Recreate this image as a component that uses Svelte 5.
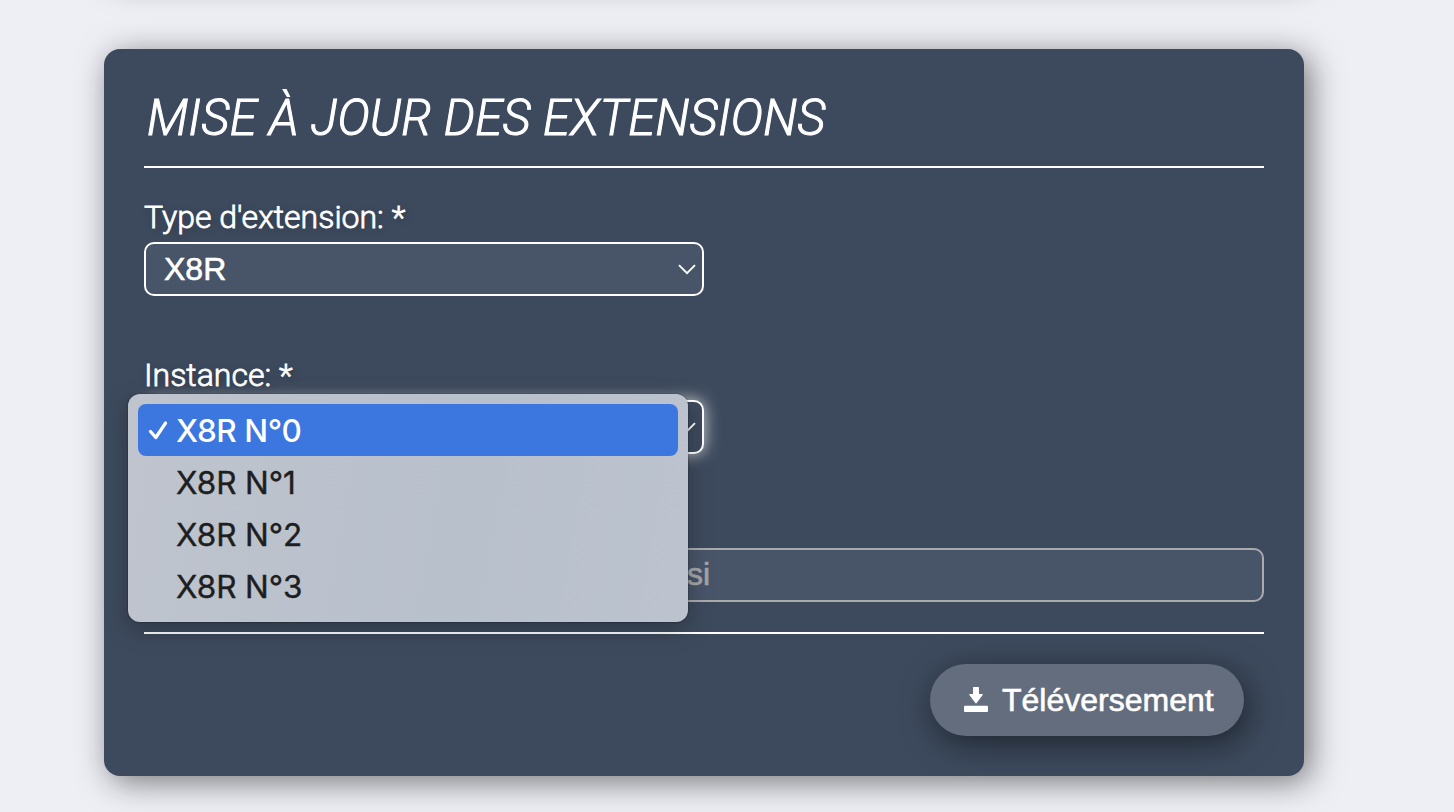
<script lang="ts">
    const instances = ["X8R N°0", "X8R N°1", "X8R N°2", "X8R N°3"];
    let extensionType = $state("X8R");
    let selected = $state(0);
    let open = $state(true);

    function choose(index: number) {
        selected = index;
        open = false;
    }
</script>

{#snippet chevron()}
    <svg class="chevron" viewBox="0 0 18 11" fill="none" stroke="currentColor">
        <path d="M1 1.2 9 9.2 17 1.2" stroke-width="1.9" />
    </svg>
{/snippet}

<main>
    <section class="card previous"></section>
    <section class="card">
        <h2>MISE À JOUR DES EXTENSIONS</h2>

        <div class="field">
            <span class="label">Type d'extension: *</span>
            <button class="control">
                <span>{extensionType}</span>
                {@render chevron()}
            </button>
        </div>

        <div class="field instance">
            <span class="label">Instance: *</span>
            <button class="control" class:focused={open} onclick={() => (open = !open)}>
                <span>{open ? "" : instances[selected]}</span>
                {@render chevron()}
            </button>

            {#if open}
                <div class="menu" role="listbox">
                    {#each instances as instance, i}
                        <button
                            class="option"
                            class:active={i === selected}
                            role="option"
                            aria-selected={i === selected}
                            onclick={() => choose(i)}
                        >
                            <span class="tick">
                                {#if i === selected}
                                    <svg viewBox="0 0 20 22" fill="none" stroke="currentColor">
                                        <path
                                            d="M2.5 12.5 7.8 18.5 17.5 4.1"
                                            stroke-width="3.3"
                                            stroke-linecap="round"
                                            stroke-linejoin="round"
                                        />
                                    </svg>
                                {/if}
                            </span>
                            {instance}
                        </button>
                    {/each}
                </div>
            {/if}
        </div>

        <div class="file"><span>si</span></div>

        <footer>
            <button class="upload">
                <svg viewBox="0 0 24 25" fill="currentColor">
                    <path
                        d="M9.6 0h4.8q.6 0 .6.6V7h3.2q1 0 .4.9L12.7 16q-.7.9-1.4 0L5.4 7.9Q4.8 7 5.8 7H9V.6q0-.6.6-.6z"
                    />
                    <rect y="18.8" width="24" height="6.2" rx="0.8" />
                </svg>
                <span>Téléversement</span>
            </button>
        </footer>
    </section>
</main>

<style>
    :global(body) {
        background: #eeeff5;
        overflow: hidden;
    }
    main {
        box-sizing: border-box;
        height: 812px;
        padding: 0 150px 0 104px;
        font-family: Roboto, sans-serif;
        color: #fff;
        overflow: hidden;
    }
    .card {
        box-sizing: border-box;
        height: 727px;
        padding: 36px 40px 40px;
        border-radius: 16px;
        background: #3d4a5d;
        box-shadow: 6px 6px 32px rgba(0, 0, 0, 0.5);
    }
    .card.previous {
        margin: -753px 0 75px;
    }
    h2 {
        box-sizing: border-box;
        height: 83px;
        margin: 0 0 31px;
        padding: 2px 0 0 3px;
        border-bottom: 2px solid #fff;
        font-size: 49px;
        font-style: italic;
        font-weight: 300;
        letter-spacing: 0.24px;
        line-height: 64px;
        white-space: nowrap;
        -webkit-text-stroke: 1px #fff;
    }
    button {
        border: none;
        color: inherit;
        font: inherit;
        text-align: left;
    }
    .field {
        position: relative;
        width: 560px;
        margin-bottom: 61px;
    }
    .field.instance {
        margin-bottom: 94px;
    }
    .label {
        display: block;
        height: 43px;
        font-size: 32px;
        font-weight: 300;
        line-height: 36px;
        text-shadow: 2px 2px 8px rgba(0, 0, 0, 0.3);
        -webkit-text-stroke: 0.8px #fff;
    }
    .control {
        display: flex;
        align-items: center;
        justify-content: space-between;
        box-sizing: border-box;
        width: 100%;
        height: 54px;
        padding: 0 6px 0 18px;
        border: 2px solid #fff;
        border-radius: 10px;
        background: #485468;
        font-family: "Liberation Sans", Arial, sans-serif;
        font-size: 32px;
        -webkit-text-stroke: 0.6px #fff;
    }
    .focused {
        background: #3d4a5d;
        box-shadow: 0 0 16px rgba(255, 255, 255, 0.8);
    }
    .chevron {
        width: 18px;
        height: 11px;
    }
    .menu {
        position: absolute;
        top: 37px;
        left: -16px;
        z-index: 1;
        box-sizing: border-box;
        width: 560px;
        height: 228px;
        padding: 10px;
        border-radius: 12px;
        background: linear-gradient(100deg, #bfc4cd, #b8c0cc 60%, #bcc3ce);
        box-shadow:
            0 0 2px rgba(0, 0, 0, 0.5),
            0 8px 24px rgba(0, 0, 0, 0.25);
    }
    .option {
        display: flex;
        align-items: center;
        width: 100%;
        height: 52px;
        padding: 0 0 0 10px;
        border-radius: 8px;
        background: none;
        color: #1d1e20;
        font-family: Inter, sans-serif;
        font-size: 31.5px;
        letter-spacing: -0.1px;
        -webkit-text-stroke: 0.4px currentColor;
    }
    .option.active {
        background: #3b77df;
        color: #fff;
        font-weight: 500;
        letter-spacing: -0.45px;
        -webkit-text-stroke: 0;
    }
    .tick {
        width: 28px;
        height: 22px;
    }
    .tick svg {
        display: block;
        width: 20px;
        height: 22px;
    }
    .file {
        box-sizing: border-box;
        height: 54px;
        padding-left: 541px;
        border: 2px solid #aaabad;
        border-radius: 10px;
        background: #485468;
        color: #a5a5a6;
        font-family: "Liberation Sans", Arial, sans-serif;
        font-size: 32px;
        line-height: 48px;
        -webkit-text-stroke: 0.7px #a5a5a6;
    }
    footer {
        display: flex;
        justify-content: flex-end;
        margin-top: 30px;
        padding: 30px 20px 0 0;
        border-top: 2px solid #fff;
    }
    .upload {
        display: flex;
        align-items: center;
        gap: 14px;
        box-sizing: border-box;
        width: 314px;
        height: 72px;
        padding: 0 0 1px 34px;
        border-radius: 36px;
        background: #646d7d;
        box-shadow: 4px 8px 32px rgba(0, 0, 0, 0.5);
        font-family: "Liberation Sans", Arial, sans-serif;
        font-size: 32px;
        -webkit-text-stroke: 0.6px #fff;
    }
    .upload svg {
        width: 24px;
        height: 25px;
    }
    .upload span {
        padding-top: 2px;
    }
</style>
